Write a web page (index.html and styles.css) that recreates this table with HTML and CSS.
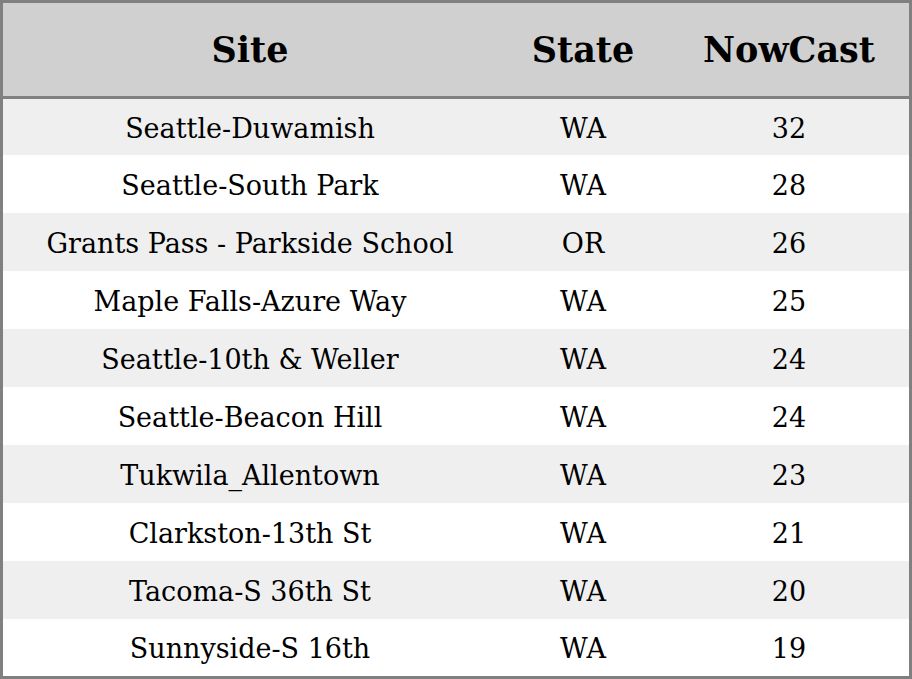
FILE: index.html
```html
<!DOCTYPE html>
<html>
<head>
<meta charset="utf-8">
<link rel="stylesheet" href="styles.css">
</head>
<body>
<table class="aq">
  <thead>
    <tr><th class="c-site">Site</th><th class="c-state">State</th><th class="c-now">NowCast</th></tr>
  </thead>
  <tbody>
    <tr><td>Seattle-Duwamish</td><td>WA</td><td>32</td></tr>
    <tr><td>Seattle-South Park</td><td>WA</td><td>28</td></tr>
    <tr><td>Grants Pass - Parkside School</td><td>OR</td><td>26</td></tr>
    <tr><td>Maple Falls-Azure Way</td><td>WA</td><td>25</td></tr>
    <tr><td>Seattle-10th &amp; Weller</td><td>WA</td><td>24</td></tr>
    <tr><td>Seattle-Beacon Hill</td><td>WA</td><td>24</td></tr>
    <tr><td>Tukwila_Allentown</td><td>WA</td><td>23</td></tr>
    <tr><td>Clarkston-13th St</td><td>WA</td><td>21</td></tr>
    <tr><td>Tacoma-S 36th St</td><td>WA</td><td>20</td></tr>
    <tr><td>Sunnyside-S 16th</td><td>WA</td><td>19</td></tr>
  </tbody>
</table>
</body>
</html>
```
FILE: styles.css
```css
html, body {
  margin: 0;
  padding: 0;
  background: #ffffff;
}
.aq {
  width: 912px;
  height: 679px;
  border-collapse: separate;
  border-spacing: 0;
  border: 3px solid #808080;
  box-sizing: border-box;
  font-family: "DejaVu Serif", serif;
  color: #000;
  table-layout: fixed;
}
.aq th {
  background: #d0d0d0;
  font-size: 35px;
  font-weight: bold;
  height: 93px;
  padding: 0;
  border-bottom: 3px solid #808080;
  text-align: center;
  vertical-align: middle;
}
.c-site { width: 494px; }
.c-state { width: 172px; }
.c-now { width: 240px; }
.aq td {
  font-size: 27px;
  height: 58px;
  padding: 2px 0 0 0;
  box-sizing: border-box;
  text-align: center;
  vertical-align: middle;
}
.aq tbody tr:first-child td {
  height: 56px;
}
.aq tbody tr:last-child td {
  height: 57px;
}
.aq tbody tr:nth-child(odd) td {
  background: #efefef;
}
.aq tbody tr:nth-child(even) td {
  background: #ffffff;
}
```
